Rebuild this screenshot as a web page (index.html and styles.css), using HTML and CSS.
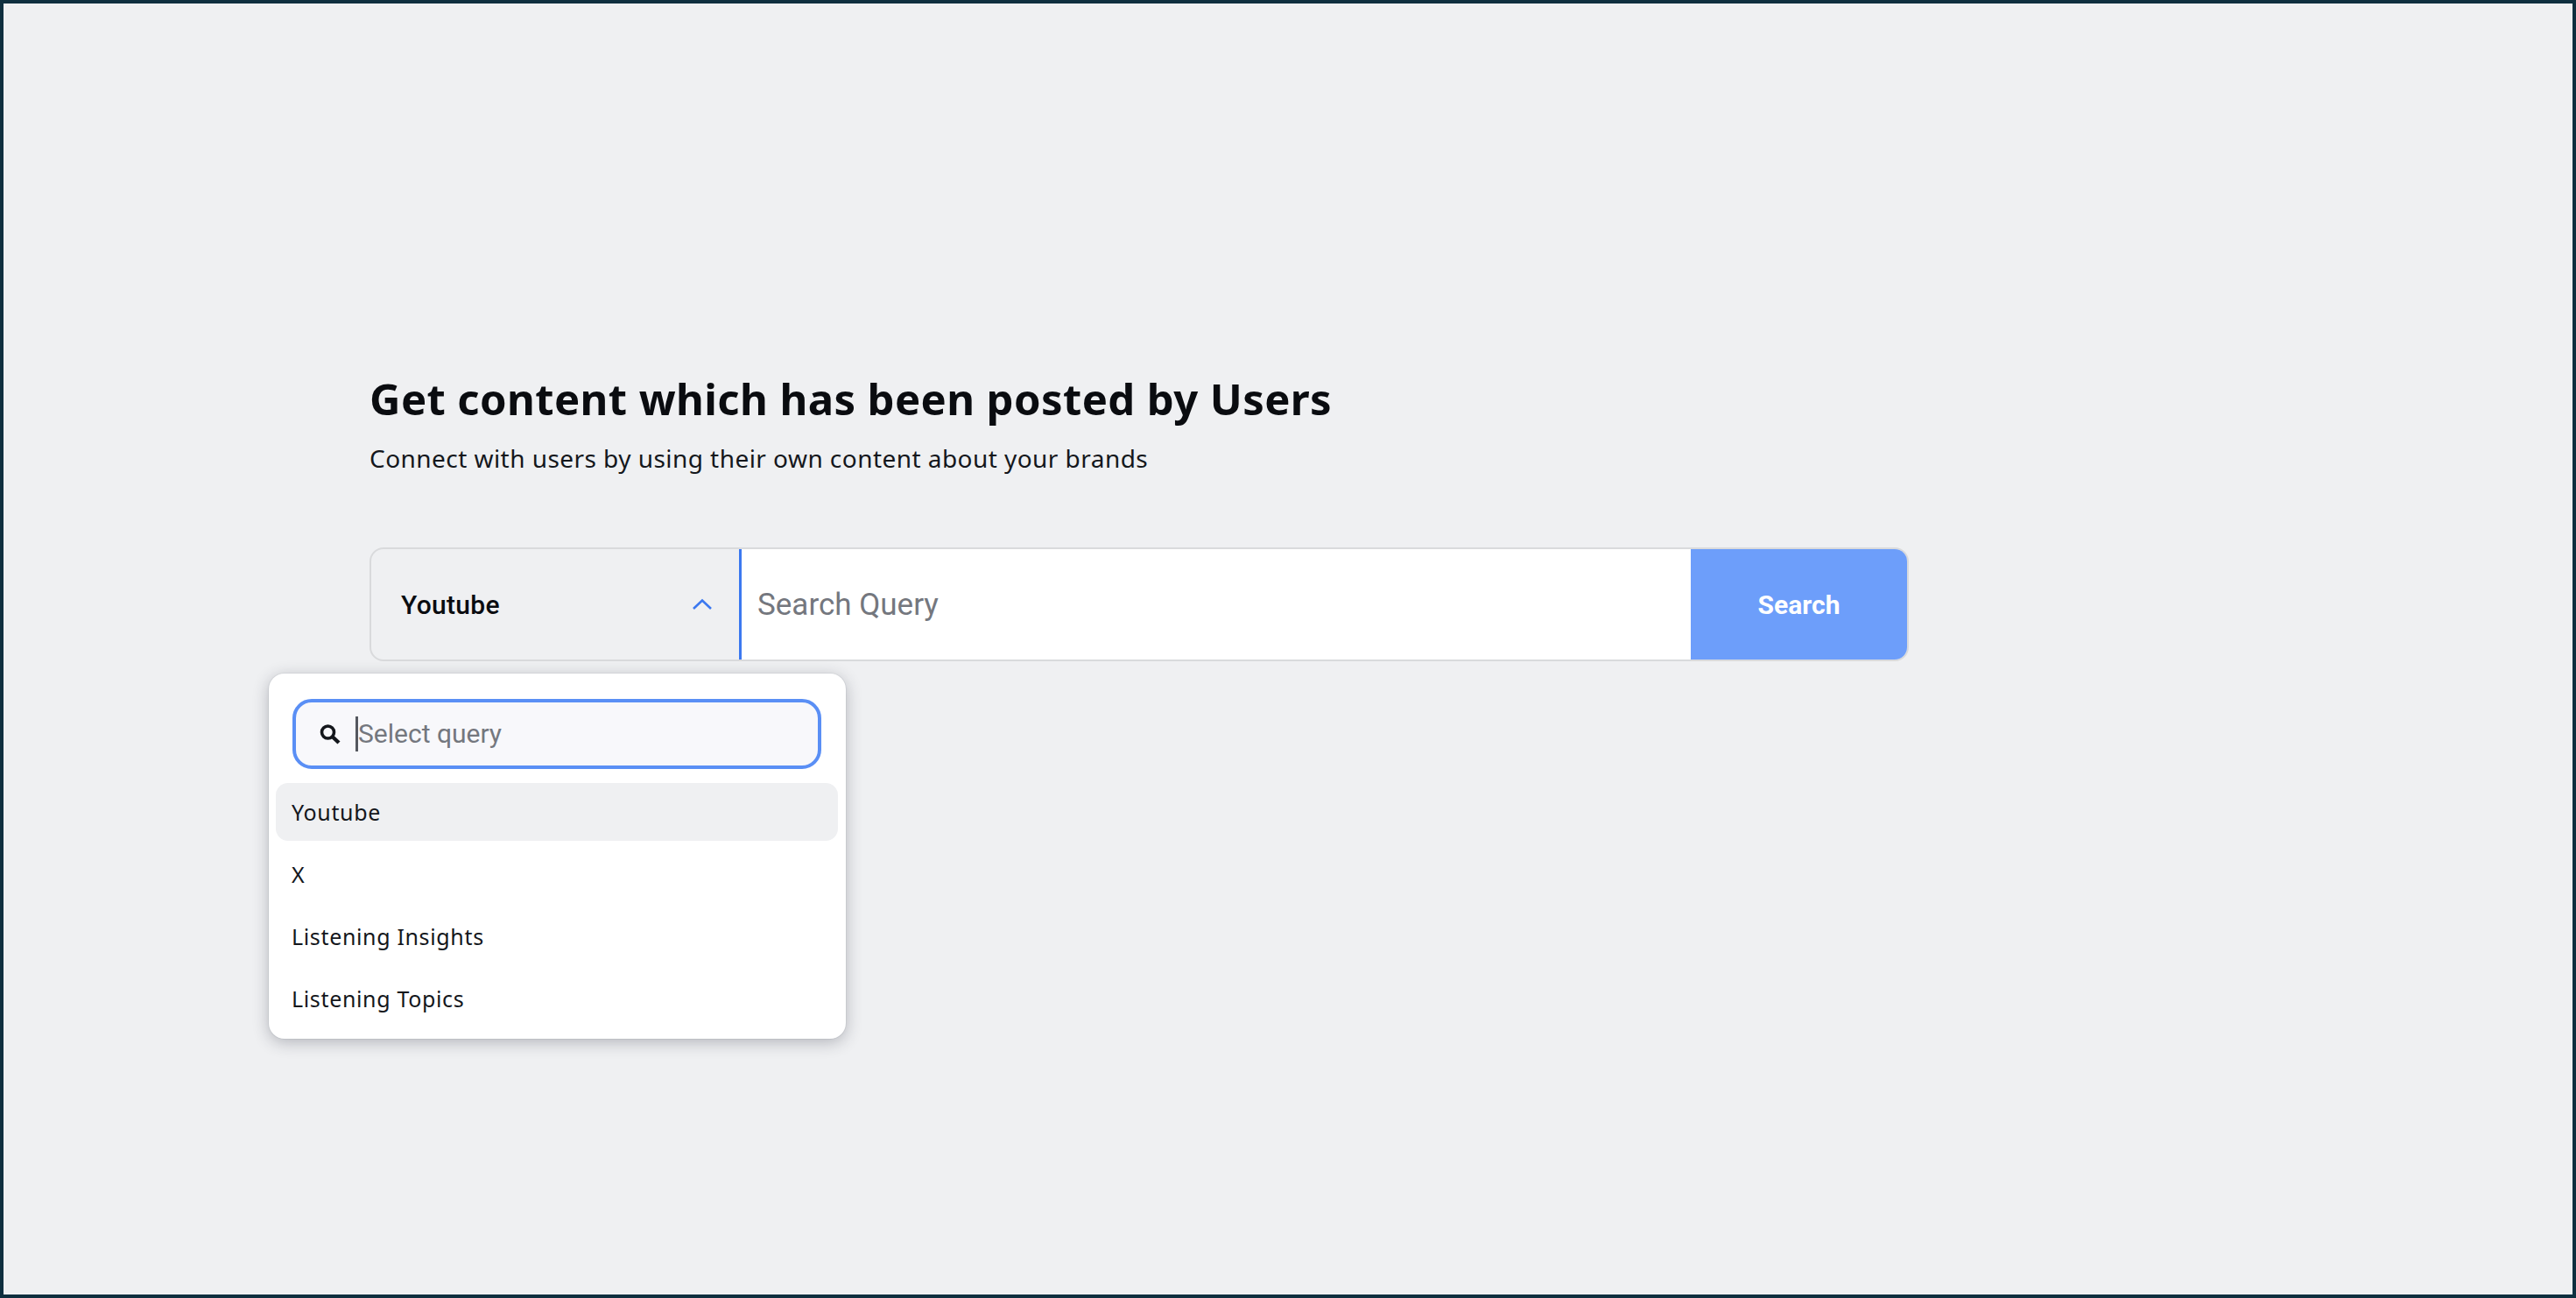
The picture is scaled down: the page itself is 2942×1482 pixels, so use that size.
FILE: index.html
```html
<!DOCTYPE html>
<html lang="en">
  <head>
    <meta charset="UTF-8" />
    <title>User Generated Content</title>
    <link rel="stylesheet" href="styles.css">
  </head>
  <body>
    <div class="frame">
      <div class="content">
        <h1 class="title">Get content which has been posted by Users</h1>
        <p class="subtitle">Connect with users by using their own content about your brands</p>

        <div class="search-bar">
          <div class="source-select">
            <span class="source-name">Youtube</span>
            <svg class="chevron" width="24" height="14" viewBox="0 0 24 14" fill="none">
              <path d="M2 12L12 2.5L22 12" stroke="#3b78f0" stroke-width="2.6" />
            </svg>
          </div>
          <input class="query-input" type="text" placeholder="Search Query" />
          <button class="search-btn">Search</button>

          <div class="dropdown">
            <div class="dropdown-search">
              <svg class="search-icon" width="26" height="24" viewBox="0 0 26 24" fill="none">
                <circle cx="10.5" cy="10" r="7" stroke="#14171c" stroke-width="3.6" />
                <path d="M15.5 15L23 22" stroke="#14171c" stroke-width="4.4" />
              </svg>
              <span class="caret"></span>
              <input class="dropdown-input" type="text" placeholder="Select query" />
            </div>
            <ul class="options">
              <li class="option active">Youtube</li>
              <li class="option">X</li>
              <li class="option">Listening Insights</li>
              <li class="option">Listening Topics</li>
            </ul>
          </div>
        </div>
      </div>
    </div>
  </body>
</html>
```

FILE: styles.css
```css
* {
  padding: 0;
  margin: 0;
  box-sizing: border-box;
}

body {
  height: 100vh;
  font-family: "Noto Sans", sans-serif;
  background-color: #eff0f2;
}

.frame {
  height: 100vh;
  border: 4px solid #0f2f3f;
  padding: 422px 0 0 418px;
}

.content {
  width: 1758px;
}

.title {
  font-size: 49px;
  line-height: 58px;
  letter-spacing: 0.4px;
  font-weight: 700;
  color: #0a0c10;
}

.subtitle {
  margin-top: 20px;
  font-size: 28px;
  line-height: 38px;
  letter-spacing: 0.45px;
  color: #14171c;
}

.search-bar {
  position: relative;
  display: flex;
  height: 130px;
  margin-top: 83px;
  border: 2px solid #d9dadc;
  border-radius: 16px;
}

.source-select {
  display: flex;
  align-items: center;
  justify-content: space-between;
  width: 423px;
  padding: 0 30px 0 34px;
  border-right: 3px solid #3b78f0;
}

.source-name {
  font-family: Roboto, sans-serif;
  font-size: 30px;
  letter-spacing: 0.3px;
  font-weight: 500;
  color: #0a0c10;
}

.query-input {
  flex: 1;
  min-width: 0;
  padding-left: 18px;
  border: none;
  outline: none;
  background-color: #ffffff;
  font-family: Roboto, sans-serif;
  font-size: 35px;
}

.query-input::placeholder {
  color: #74777e;
}

.search-btn {
  width: 247px;
  border: none;
  border-radius: 0 14px 14px 0;
  background-color: #6d9efa;
  color: #ffffff;
  font-family: Roboto, sans-serif;
  font-size: 30px;
  font-weight: 700;
}

.dropdown {
  position: absolute;
  top: 142px;
  left: -117px;
  width: 659px;
  height: 417px;
  padding: 29px 9px 0 8px;
  background-color: #ffffff;
  border-radius: 18px;
  box-shadow: 0 0 0 1px rgba(40, 44, 60, 0.06), 0 4px 18px rgba(40, 44, 60, 0.3);
}

.dropdown-search {
  display: flex;
  align-items: center;
  width: 604px;
  height: 80px;
  margin-left: 19px;
  padding-left: 26px;
  background-color: #f8f8fb;
  border: 4px solid #5a8ff5;
  border-radius: 22px;
}

.caret {
  width: 3px;
  height: 40px;
  margin-left: 16px;
  background-color: #55585f;
}

.dropdown-input {
  flex: 1;
  min-width: 0;
  padding-bottom: 2px;
  border: none;
  outline: none;
  background: transparent;
  font-family: Roboto, sans-serif;
  font-size: 30px;
}

.dropdown-input::placeholder {
  color: #74777e;
}

.options {
  list-style: none;
  margin-top: 16px;
}

.option {
  height: 66px;
  margin-bottom: 5px;
  padding-left: 18px;
  border-radius: 14px;
  font-size: 25px;
  letter-spacing: 0.65px;
  line-height: 66px;
  color: #14171c;
}

.option.active {
  background-color: #eff0f2;
}
```
